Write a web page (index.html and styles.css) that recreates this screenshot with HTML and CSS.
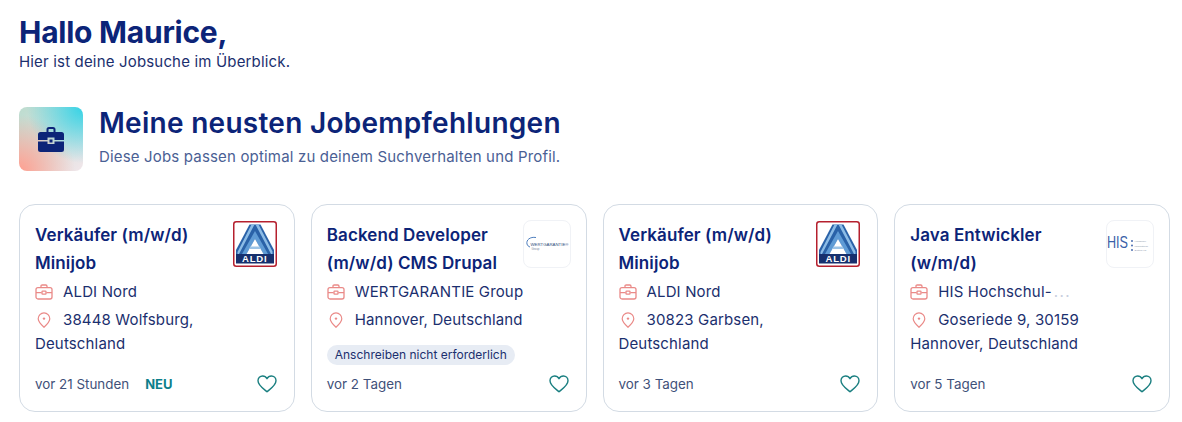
FILE: index.html
```html
<!DOCTYPE html>
<html lang="de">
<head>
<meta charset="utf-8">
<title>Jobsuche</title>
<link rel="stylesheet" href="styles.css">
</head>
<body>
<svg class="defs" width="0" height="0" aria-hidden="true">
  <symbol id="case" viewBox="0 0 18 16">
    <rect x="1" y="3.6" width="16" height="11.4" rx="2" fill="none" stroke="currentColor" stroke-width="1.3"/>
    <path d="M6 3.6V2.2Q6 1 7.2 1h3.6Q12 1 12 2.2v1.4M1 8.6h5.6M11.4 8.6H17" fill="none" stroke="currentColor" stroke-width="1.3"/>
    <rect x="7" y="7.2" width="4" height="3" rx=".6" fill="none" stroke="currentColor" stroke-width="1.3"/>
  </symbol>
  <symbol id="pin" viewBox="0 0 14 16">
    <path d="M7 15.2C4 12.4 1.2 9.6 1.2 6.7a5.8 5.8 0 0 1 11.6 0c0 2.9-2.8 5.7-5.8 8.5Z" fill="none" stroke="currentColor" stroke-width="1.2"/>
    <circle cx="7" cy="6.6" r="1.2" fill="currentColor"/>
  </symbol>
  <symbol id="heart" viewBox="0 0 20 18">
    <path d="M10 16.8C6.8 14 1 10.400 1 5.800 1 3 3.100 1 5.600 1 7.500 1 9.100 2 10 3.700 10.900 2 12.500 1 14.400 1 16.900 1 19 3 19 5.800c0 4.600-5.800 8.200-9 11Z" fill="none" stroke="currentColor" stroke-width="1.4" stroke-linejoin="round"/>
  </symbol>
  <symbol id="aldi-mark" viewBox="0 0 44 46">
    <rect x=".75" y=".75" width="42.500" height="44.500" rx="2.500" fill="#fff" stroke="#b5202e" stroke-width="1.500"/>
    <path d="M16.500 3.500h11L41 29v4H3v-4Z" fill="#2a62a8"/>
    <path d="M18.500 3.500h3L6 33H4.500v-2ZM25.500 3.500l14 27V33h-1.500L22.500 3.500Z" fill="#8cbce6"/>
    <path d="M22 10 35 33h-4.500L22 18 13.500 33H9Z" fill="#5f9bd5"/>
    <path d="M22 18 30.500 33h-17Z" fill="#fff"/>
    <path d="M17.500 25.500h9l1.500 2.500H16Z" fill="#9cc3e6"/>
    <rect x="3" y="33" width="38" height="9.500" fill="#16306e"/>
  </symbol>
</svg>

<main class="page">
  <header class="greeting">
    <h1>Hallo Maurice,</h1>
    <p>Hier ist deine Jobsuche im Überblick.</p>
  </header>

  <section class="recs">
    <div class="recs-head">
      <div class="tile">
        <svg width="26" height="26" viewBox="0 0 26 26" aria-hidden="true">
          <path d="M8.500 6V3.500Q8.500 1 11 1h4Q17.500 1 17.500 3.500V6h-2V3.500q0-.5-.5-.5h-4q-.5 0-.5.5V6Z" fill="#0c2478"/>
          <path d="M2.500 6h21A2.500 2.500 0 0 1 26 8.500V14h-9.500v-2.500h-7V14H0V8.500A2.500 2.500 0 0 1 2.500 6Z" fill="#0c2478"/>
          <path d="M0 15.500h9.500V18h7v-2.500H26V23.500a2.500 2.500 0 0 1-2.500 2.500h-21A2.500 2.500 0 0 1 0 23.500Z" fill="#0c2478"/>
          <rect x="11.500" y="13.500" width="3" height="3" fill="#0c2478"/>
        </svg>
      </div>
      <div class="recs-text">
        <h2>Meine neusten Jobempfehlungen</h2>
        <p>Diese Jobs passen optimal zu deinem Suchverhalten und Profil.</p>
      </div>
    </div>

    <div class="cards">
      <article class="card">
        <div class="card-top">
          <h3>Verkäufer (m/w/d) Minijob</h3>
          <div class="aldi-logo">
            <svg class="aldi-art"><use href="#aldi-mark"/></svg>
            <span class="aldi-word">ALDI</span>
          </div>
        </div>
        <p class="line"><svg class="ic-case"><use href="#case"/></svg>ALDI Nord</p>
        <p class="line"><svg class="ic-pin"><use href="#pin"/></svg>38448 Wolfsburg,<br>Deutschland</p>
        <div class="foot">
          <span class="age">vor 21 Stunden</span><span class="new">NEU</span>
          <svg class="heart"><use href="#heart"/></svg>
        </div>
      </article>

      <article class="card">
        <div class="card-top">
          <h3>Backend Developer (m/w/d) CMS Drupal</h3>
          <div class="logo-box">
            <svg width="46" height="46" viewBox="0 0 46 46" aria-hidden="true">
              <path d="M12 16.500C6 15.500 2 19 3 23c.4 1.500 1.500 2.500 3 3" fill="none" stroke="#3a6fb5" stroke-width=".9"/>
              <text x="6.500" y="24.500" class="wg" textLength="38" lengthAdjust="spacingAndGlyphs">WERTGARANTIE®</text>
              <text x="7.500" y="29" class="wg-sub">Group</text>
            </svg>
          </div>
        </div>
        <p class="line"><svg class="ic-case"><use href="#case"/></svg>WERTGARANTIE Group</p>
        <p class="line"><svg class="ic-pin"><use href="#pin"/></svg>Hannover, Deutschland</p>
        <span class="badge">Anschreiben nicht erforderlich</span>
        <div class="foot">
          <span class="age">vor 2 Tagen</span>
          <svg class="heart"><use href="#heart"/></svg>
        </div>
      </article>

      <article class="card">
        <div class="card-top">
          <h3>Verkäufer (m/w/d) Minijob</h3>
          <div class="aldi-logo">
            <svg class="aldi-art"><use href="#aldi-mark"/></svg>
            <span class="aldi-word">ALDI</span>
          </div>
        </div>
        <p class="line"><svg class="ic-case"><use href="#case"/></svg>ALDI Nord</p>
        <p class="line"><svg class="ic-pin"><use href="#pin"/></svg>30823 Garbsen,<br>Deutschland</p>
        <div class="foot">
          <span class="age">vor 3 Tagen</span>
          <svg class="heart"><use href="#heart"/></svg>
        </div>
      </article>

      <article class="card">
        <div class="card-top">
          <h3>Java Entwickler (w/m/d)</h3>
          <div class="logo-box">
            <svg width="46" height="46" viewBox="0 0 46 46" aria-hidden="true">
              <text x="0" y="27" class="his" textLength="21" lengthAdjust="spacingAndGlyphs">HIS</text>
              <circle cx="25" cy="20" r=".9" fill="#3a5fa8"/>
              <circle cx="25" cy="24.500" r=".9" fill="#3a5fa8"/>
              <circle cx="25" cy="29" r=".9" fill="#3a5fa8"/>
              <text x="27.500" y="21" class="his-sub">Hochschul-</text>
              <text x="27.500" y="25.500" class="his-sub">Informations-</text>
              <text x="27.500" y="30" class="his-sub">System eG</text>
            </svg>
          </div>
        </div>
        <p class="line"><svg class="ic-case"><use href="#case"/></svg>HIS Hochschul-<span class="fade">...</span></p>
        <p class="line"><svg class="ic-pin"><use href="#pin"/></svg>Goseriede 9, 30159<br>Hannover, Deutschland</p>
        <div class="foot">
          <span class="age">vor 5 Tagen</span>
          <svg class="heart"><use href="#heart"/></svg>
        </div>
      </article>
    </div>
  </section>
</main>
</body>
</html>
```
FILE: styles.css
```css
* { box-sizing: border-box; }
html, body { margin: 0; padding: 0; background: #fff; }
body {
  font-family: "Inter", "Liberation Sans", sans-serif;
  color: #1b2f6e;
  overflow: hidden;
}
.defs { position: absolute; }
p, h1, h2, h3 { margin: 0; }

.page { padding: 14px 12px 0 19px; }

.greeting h1 {
  font-size: 30px;
  line-height: 36px;
  font-weight: 700;
  color: #0c2478;
  letter-spacing: -.25px;
}
.greeting p { font-size: 15px; line-height: 20px; margin-top: 2px; color: #1b2f6e; letter-spacing: .17px; }

.recs { margin-top: 35px; }
.recs-head { display: flex; gap: 16px; align-items: flex-start; }
.tile {
  width: 64px;
  height: 64px;
  border-radius: 8px;
  flex: none;
  display: flex;
  align-items: center;
  justify-content: center;
  background:
    radial-gradient(circle at 100% 0, #33d3e6 0, rgba(51, 211, 230, 0) 62%),
    radial-gradient(circle at 0 100%, #ff9f90 0, rgba(255, 159, 144, 0) 62%),
    linear-gradient(135deg, #bcdccf, #f1e6ea);
}
.recs-text h2 {
  font-size: 28px;
  line-height: 32px;
  font-weight: 600;
  color: #0c2478;
  letter-spacing: .28px;
}
.recs-text p { font-size: 15px; line-height: 20px; margin-top: 8px; color: #4a6094; letter-spacing: .17px; }

.cards {
  display: grid;
  grid-template-columns: repeat(4, 1fr);
  gap: 16px;
  margin-top: 33px;
}
.card {
  height: 208px;
  border: 1px solid #d3dbe4;
  border-radius: 16px;
  padding: 15px;
  display: flex;
  flex-direction: column;
  align-items: flex-start;
}
.card-top { display: flex; justify-content: space-between; gap: 12px; width: 100%; margin-bottom: 3px; }
.card-top h3 {
  font-size: 17px;
  line-height: 28px;
  padding-top: 1px;
  font-weight: 600;
  color: #0c2478;
  letter-spacing: .1px;
}
.aldi-logo { position: relative; width: 44px; height: 46px; flex: none; margin: 1px 2px 0 0; }
.aldi-art { display: block; width: 44px; height: 46px; }
.aldi-word {
  position: absolute;
  left: 3px;
  right: 3px;
  top: 33px;
  height: 9.500px;
  font: 700 9.500px/9.500px "Liberation Sans", sans-serif;
  letter-spacing: .8px;
  color: #fff;
  text-align: center;
}
.logo-box {
  width: 48px;
  height: 48px;
  flex: none;
  border: 1px solid #f0f2f6;
  border-radius: 8px;
  overflow: hidden;
}
.wg { font: 3.800px "Liberation Sans", sans-serif; fill: #2e4a7c; }
.wg-sub { font: 2.800px "Liberation Sans", sans-serif; fill: #7d889c; }
.his { font: 16.500px "Liberation Sans", sans-serif; fill: #3a5fa8; }
.his-sub { font: 2.400px "Liberation Sans", sans-serif; fill: #8a95aa; }

.line { font-size: 15px; line-height: 24px; margin-bottom: 4px; color: #1b2f6e; letter-spacing: .15px; }
.line svg { vertical-align: -3px; }
.ic-case { width: 18px; height: 16px; margin-right: 10px; color: #ea8a88; }
.ic-pin { width: 14px; height: 16px; margin: 0 12px 0 2px; color: #ea8a88; }
.fade { color: #c8cede; margin-left: 2px; letter-spacing: 1.500px; }

.badge {
  font-size: 12px;
  line-height: 20px;
  height: 20px;
  padding: 0 8px;
  border-radius: 10px;
  background: #e7ecf4;
  margin-top: 9px;
}
.foot {
  margin-top: auto;
  width: 100%;
  height: 24px;
  display: flex;
  align-items: center;
  font-size: 13.400px;
  color: #3f5179;
}
.new { margin-left: 16px; font-weight: 700; font-size: 13px; color: #0d7f8b; }
.heart { width: 20px; height: 18px; margin-left: auto; margin-right: 2px; color: #1a7f80; }
```
